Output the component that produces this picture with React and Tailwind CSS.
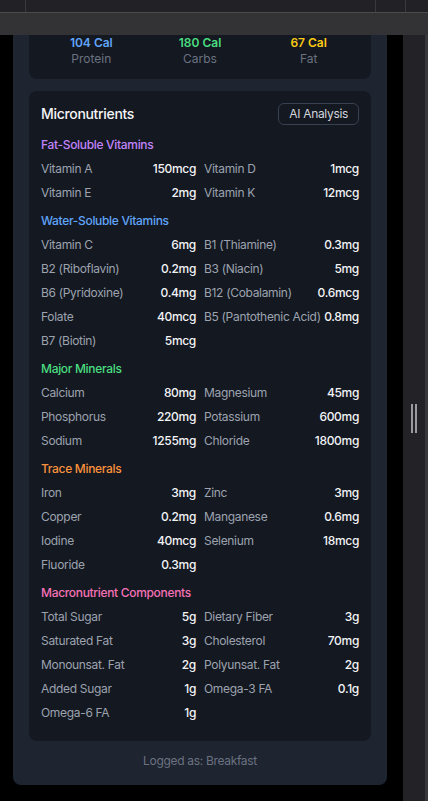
const sections = [
  {
    title: 'Fat-Soluble Vitamins',
    color: 'text-[#c084fc]',
    items: [
      ['Vitamin A', '150mcg'],
      ['Vitamin D', '1mcg'],
      ['Vitamin E', '2mg'],
      ['Vitamin K', '12mcg'],
    ],
  },
  {
    title: 'Water-Soluble Vitamins',
    color: 'text-[#60a5fa]',
    items: [
      ['Vitamin C', '6mg'],
      ['B1 (Thiamine)', '0.3mg'],
      ['B2 (Riboflavin)', '0.2mg'],
      ['B3 (Niacin)', '5mg'],
      ['B6 (Pyridoxine)', '0.4mg'],
      ['B12 (Cobalamin)', '0.6mcg'],
      ['Folate', '40mcg'],
      ['B5 (Pantothenic Acid)', '0.8mg'],
      ['B7 (Biotin)', '5mcg'],
    ],
  },
  {
    title: 'Major Minerals',
    color: 'text-[#4ade80]',
    items: [
      ['Calcium', '80mg'],
      ['Magnesium', '45mg'],
      ['Phosphorus', '220mg'],
      ['Potassium', '600mg'],
      ['Sodium', '1255mg'],
      ['Chloride', '1800mg'],
    ],
  },
  {
    title: 'Trace Minerals',
    color: 'text-[#fb923c]',
    items: [
      ['Iron', '3mg'],
      ['Zinc', '3mg'],
      ['Copper', '0.2mg'],
      ['Manganese', '0.6mg'],
      ['Iodine', '40mcg'],
      ['Selenium', '18mcg'],
      ['Fluoride', '0.3mg'],
    ],
  },
  {
    title: 'Macronutrient Components',
    color: 'text-[#f472b6]',
    items: [
      ['Total Sugar', '5g'],
      ['Dietary Fiber', '3g'],
      ['Saturated Fat', '3g'],
      ['Cholesterol', '70mg'],
      ['Monounsat. Fat', '2g'],
      ['Polyunsat. Fat', '2g'],
      ['Added Sugar', '1g'],
      ['Omega-3 FA', '0.1g'],
      ['Omega-6 FA', '1g'],
    ],
  },
];

const macros = [
  { value: '104 Cal', label: 'Protein', color: 'text-[#60a5fa]' },
  { value: '180 Cal', label: 'Carbs', color: 'text-[#4ade80]' },
  { value: '67 Cal', label: 'Fat', color: 'text-[#facc15]' },
];

function NutrientRow({ label, value }) {
  return (
    <div className="flex h-6 items-center justify-between text-xs">
      <span className="text-[#9ca3af] whitespace-nowrap">{label}</span>
      <span className="font-medium text-[#f3f4f6]">{value}</span>
    </div>
  );
}

export default function App() {
  return (
    <div className="flex h-[801px] w-[428px] flex-col overflow-hidden bg-black font-['Inter',sans-serif]">
      {/* barre du haut */}
      <div className="flex h-[12px] bg-[#222126]">
        <div className="w-[25px]" />
        <div className="w-[350px] border-l border-[#3a393e]" />
        <div className="w-[30px] border-l border-[#3a393e]" />
        <div className="flex-1 border-l border-[#3a393e]" />
      </div>
      <div className="h-[23px] border-t border-[#4a4a4c] bg-[#333335]" />

      <div className="flex flex-1 overflow-hidden">
        <div className="w-[403px] pl-[13px]">
          <div className="w-[374px] rounded-b-lg bg-[#1e2430] px-4 tracking-[-0.02em]">
            {/* macros */}
            <div className="grid grid-cols-3 rounded-b-lg bg-[#141821] px-2 pb-3 text-center text-xs leading-4 tracking-normal">
              {macros.map((m) => (
                <div key={m.label}>
                  <div className={`font-semibold ${m.color}`}>{m.value}</div>
                  <div className="text-[#6b7280]">{m.label}</div>
                </div>
              ))}
            </div>

            {/* micronutriments */}
            <div className="mt-3 rounded-lg bg-[#141821] px-3 pt-3 pb-4">
              <div className="mb-2 flex items-center justify-between">
                <h3 className="text-sm font-medium text-[#f3f4f6]">Micronutrients</h3>
                <button
                  type="button"
                  className="rounded-md border border-[#374151] px-2.5 py-0.5 text-xs text-[#d1d5db]"
                >
                  AI Analysis
                </button>
              </div>

              <div className="space-y-1">
                {sections.map((section) => (
                  <div key={section.title}>
                    <div className={`flex h-6 items-center text-xs font-medium ${section.color}`}>
                      {section.title}
                    </div>
                    <div className="grid grid-cols-2 gap-x-2">
                      {section.items.map(([label, value]) => (
                        <NutrientRow key={label} label={label} value={value} />
                      ))}
                    </div>
                  </div>
                ))}
              </div>
            </div>

            <p className="mt-3 pb-4 text-center text-xs leading-4 text-[#6b7280]">
              Logged as: Breakfast
            </p>
          </div>
        </div>

        {/* panneau latéral */}
        <div className="flex flex-1 items-center border-r-[3px] border-[#38373b] bg-[#232226] pl-[8px]">
          <div className="flex gap-[2px]">
            <div className="h-[29px] w-[2px] bg-[#9b9b9e]" />
            <div className="h-[29px] w-[2px] bg-[#9b9b9e]" />
          </div>
        </div>
      </div>
    </div>
  );
}
